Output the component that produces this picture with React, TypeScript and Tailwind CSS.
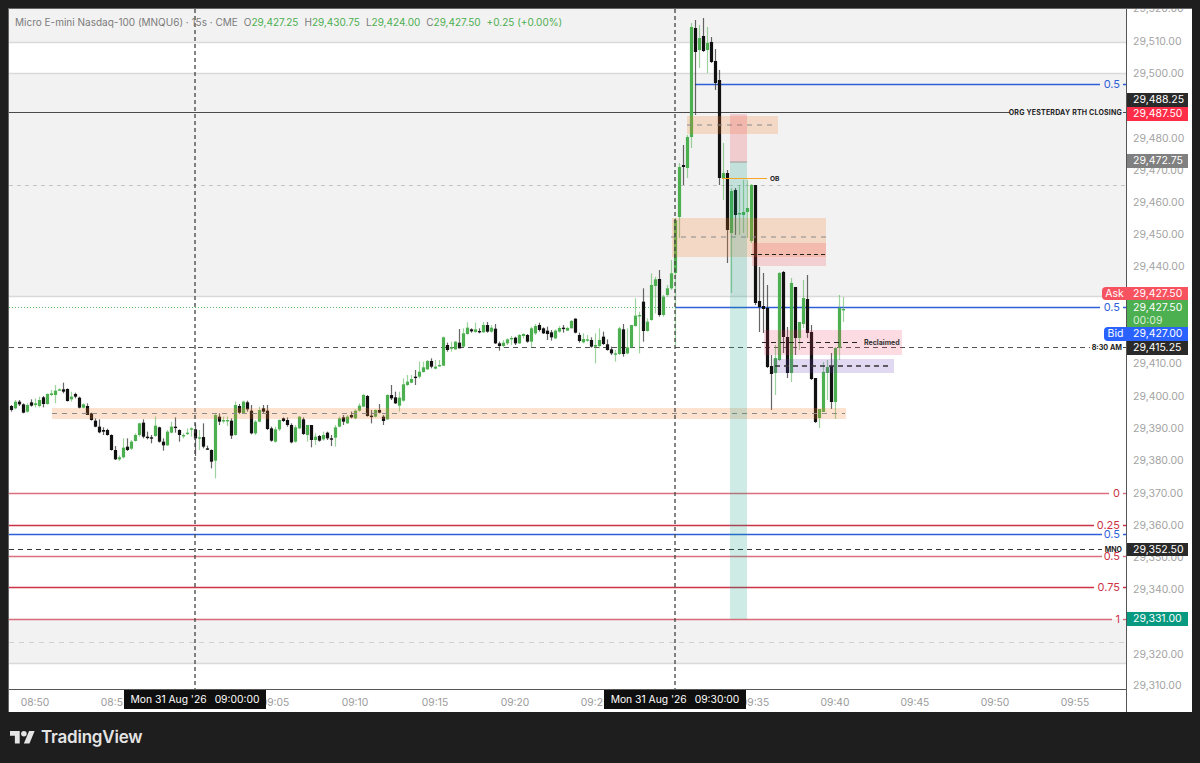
import React from "react";

// [isGreen, bodyTop, bodyBottom, high, low]
type C = [number, number, number, number, number];

// read off the chart at 3x, y is (value / 3 + offset)
const early: C[] = [
  [0,108,120,105,125],[1,95,115,90,118],[0,95,103,90,108],[0,103,128,100,130],[1,105,125,100,128],[0,97,107,88,110],[1,100,105,85,112],[1,90,108,80,112],[0,82,102,78,112],[1,72,102,70,104],
  [1,70,75,60,78],[1,62,75,45,100],[1,58,62,55,63],[0,58,65,38,70],[0,57,93,55,95],[1,80,88,65,95],[0,72,80,68,85],[0,83,113,80,115],[1,103,113,100,115],[0,108,135,100,135],
  [0,130,150,128,152],[0,152,170,145,172],[0,170,187,148,190],[0,180,185,172,195],[0,180,195,176,197],[0,195,240,193,242],[0,240,268,228,270],[1,262,268,256,273],[1,233,262,205,265],[0,230,240,205,243],
  [1,215,236,210,240],[1,195,213,190,215],[1,160,195,158,200],[0,158,200,148,205],[0,200,204,185,208],[0,202,203,195,220],[1,167,198,140,200],[0,172,215,170,218],[0,215,226,205,242],[1,185,226,180,228],
  [1,170,188,155,190],[0,170,173,142,188],[0,180,195,178,215],[1,195,198,190,205],[1,188,190,175,195],[1,175,178,172,200],[0,178,205,160,258],[1,202,205,180,240],[0,201,230,160,235],[0,235,237,227,240],
  [0,240,275,238,295],[1,135,272,130,325],[0,140,155,130,165],[1,150,152,140,160],[1,150,152,140,168],[0,152,197,145,207],[1,105,195,95,197],[0,108,128,102,132],[1,95,130,92,132],[0,97,118,92,125],
  [0,122,190,105,193],[1,155,190,150,195],[1,120,155,110,157],[0,115,125,105,130],[0,122,177,105,180],[0,175,212,170,215],[1,178,215,170,218],[1,150,178,148,183],[0,145,153,142,156],[0,150,165,142,170],
  [0,165,217,160,220],[1,172,215,165,218],[1,140,175,138,178],[0,148,192,142,195],[1,165,195,165,215],[0,165,210,165,232],[1,200,210,190,225],[0,198,212,195,215],[1,195,208,185,212],[0,188,205,185,210],
  [0,205,207,195,228],[1,172,203,165,230],[1,145,170,140,172],
];

const middle: C[] = [
  [0,472,485,465,495],[1,470,490,465,492],[0,465,472,455,475],[1,452,475,448,478],[1,437,452,430,455],[1,405,440,402,442],[0,408,468,405,470],[0,467,470,450,490],[1,450,470,448,472],[0,450,458,432,460],
  [0,470,483,465,495],[1,405,478,403,480],[0,405,415,375,420],[0,412,430,395,432],[1,413,437,395,455],[1,373,422,355,425],[1,365,375,345,378],[1,357,368,345,370],[0,350,352,330,375],[1,335,350,305,355],
  [1,322,336,305,338],[1,303,328,300,330],[0,303,320,295,325],[1,320,326,300,328],[1,315,318,300,320],[1,232,317,230,318],[0,255,270,248,275],[1,262,265,245,275],[1,245,268,243,270],[0,248,265,207,265],
  [1,220,260,205,262],[1,203,222,187,224],[0,208,214,205,218],[1,208,216,188,218],[0,213,217,205,220],[1,195,217,186,218],[0,195,215,186,218],[1,203,215,195,218],[0,206,250,192,252],[0,250,258,245,272],
  [1,248,258,240,262],[1,238,250,235,255],[1,234,238,228,255],[0,233,250,230,255],[1,225,250,222,252],[1,222,228,220,235],[0,225,245,222,248],[1,205,245,200,262],[1,198,220,192,225],[0,195,210,188,215],
  [0,205,220,202,222],[0,212,222,200,240],[0,217,232,210,242],[1,212,235,208,238],[1,204,215,198,218],[0,203,205,195,218],[1,204,212,200,212],[1,183,205,180,205],[0,176,218,175,220],[0,225,243,218,248],
  [1,237,247,220,250],[1,238,240,225,245],[0,240,260,232,263],[1,255,260,220,310],[1,240,258,205,265],[0,230,252,215,255],[0,253,270,238,272],[0,268,280,260,285],[1,280,283,270,305],[1,205,282,200,285],
  [0,208,282,192,290],[1,262,280,205,283],[1,195,262,195,265],[1,167,198,115,200],[1,165,168,155,280],[0,125,213,85,245],[1,185,213,175,215],[1,75,180,40,182],[1,58,78,50,160],[0,57,165,30,170],
  [1,110,165,105,170],[1,85,105,75,110],[1,40,85,0,90],
];

// already in page pixels, starts at the 09:30 candle
const late: C[] = [
  [1,220,273,218,345],[1,167,217,163,238],[0,165,167,145,185],[1,137,168,135,178],[1,27,137,23,148],[0,28,52,20,115],[1,38,50,25,68],[0,36,51,18,52],[1,43,50,27,73],[0,42,62,37,63],
  [0,61,83,49,90],[0,80,178,70,185],[1,173,178,143,200],[0,173,230,170,263],[1,191,233,188,293],[0,190,215,188,235],[1,213,214,185,235],[1,212,215,180,233],[1,208,212,180,238],[1,185,241,184,243],
  [0,185,303,185,305],[0,301,307,267,332],[0,306,309,273,333],[0,308,367,285,368],[0,366,374,355,410],[1,358,373,345,395],[1,273,360,272,361],[0,272,337,271,353],[0,337,373,327,378],[1,283,373,278,382],
  [0,287,338,287,355],[1,322,338,322,350],[1,298,324,280,328],[0,299,333,275,338],[0,332,379,325,380],[0,378,422,378,423],[1,409,418,410,428],[1,372,412,362,412],[1,367,373,360,400],[0,366,402,353,409],
  [1,348,402,347,419],[1,308,348,295,360],[1,309,310,297,322],
];

const toPage = (list: C[], startX: number, offsetY: number, scale: number) =>
  list.map((c, i) => ({
    x: startX + 4 * i,
    up: c[0] === 1,
    top: c[1] / scale + offsetY,
    bottom: c[2] / scale + offsetY,
    high: c[3] / scale + offsetY,
    low: c[4] / scale + offsetY,
  }));

const candles = [
  ...toPage(early, 11.5, 370, 3),
  ...toPage(middle, 343.5, 260, 3),
  ...toPage(late, 675.5, 0, 1),
];

const priceTicks = [
  ["29,520.00", 8], ["29,510.00", 41], ["29,500.00", 73], ["29,480.00", 138], ["29,470.00", 170], ["29,460.00", 202],
  ["29,450.00", 234], ["29,440.00", 266], ["29,410.00", 363], ["29,400.00", 396], ["29,390.00", 428], ["29,380.00", 460],
  ["29,370.00", 493], ["29,360.00", 525], ["29,350.00", 557], ["29,340.00", 589], ["29,320.00", 654], ["29,310.00", 685],
] as const;

const priceTags = [
  { text: "29,488.25", top: 93, height: 14, bg: "bg-[#2a2a2a]" },
  { text: "29,487.50", top: 107, height: 14, bg: "bg-[#ff2d48]" },
  { text: "29,472.75", top: 154, height: 14, bg: "bg-[#808080]" },
  { text: "29,427.50", top: 287, height: 13, bg: "bg-[#f7525f]" },
  { text: "29,427.00", top: 327, height: 14, bg: "bg-[#2962ff]" },
  { text: "29,415.25", top: 341, height: 14, bg: "bg-[#2a2a2a]" },
  { text: "29,352.50", top: 543, height: 13, bg: "bg-[#2a2a2a]" },
  { text: "29,331.00", top: 612, height: 14, bg: "bg-[#089981]" },
];

const timeTicks = [
  ["08:50", 35], ["08:55", 115], ["09:05", 275], ["09:10", 355], ["09:15", 435], ["09:20", 515],
  ["09:25", 595], ["09:35", 755], ["09:40", 835], ["09:45", 915], ["09:50", 995], ["09:55", 1075],
] as const;

const RED = "#cc3347";
const BLUE = "#2f5fd8";

const fibLines = [
  { y: 84, x1: 695, x2: 1100, label: "0.5", color: BLUE, width: 1.5, opacity: 1 },
  { y: 307, x1: 675, x2: 1100, label: "0.5", color: BLUE, width: 1.5, opacity: 1 },
  { y: 493, x1: 9, x2: 1109, label: "0", color: RED, width: 1.4, opacity: 0.7 },
  { y: 525, x1: 9, x2: 1094, label: "0.25", color: RED, width: 1.5, opacity: 1 },
  { y: 534, x1: 9, x2: 1102, label: "0.5", color: BLUE, width: 1.5, opacity: 1 },
  { y: 556, x1: 9, x2: 1102, label: "0.5", color: RED, width: 1.4, opacity: 0.7 },
  { y: 587, x1: 9, x2: 1094, label: "0.75", color: RED, width: 1.5, opacity: 1 },
  { y: 619, x1: 9, x2: 1112, label: "1", color: RED, width: 1.4, opacity: 0.7 },
];

function ChartDrawing() {
  return (
    <svg className="absolute inset-0" width={1117} height={680} viewBox="9 9 1117 680">
      {/* session bands */}
      <rect x={9} y={9} width={1117} height={34} fill="#f2f2f2" />
      <rect x={9} y={73} width={1117} height={224} fill="#f2f2f2" />
      <rect x={9} y={619} width={1117} height={45} fill="#f2f2f2" />
      {[42.5, 73.5, 296.5, 663.5].map((y) => (
        <line key={y} x1={9} x2={1126} y1={y} y2={y} stroke="#d9d9d9" strokeWidth={1.6} />
      ))}
      <line x1={9} x2={1126} y1={185.5} y2={185.5} stroke="#c4c4c4" strokeDasharray="4 4" />
      <line x1={9} x2={1126} y1={642.5} y2={642.5} stroke="#d0d0d0" strokeDasharray="5 5" />

      {/* levels under the candles */}
      <line x1={9} x2={1010} y1={112.5} y2={112.5} stroke="#4a4a4a" strokeWidth={1.1} />
      <line x1={1123} x2={1126} y1={112.5} y2={112.5} stroke="#4a4a4a" />
      <line x1={9} x2={675} y1={307.5} y2={307.5} stroke="#5fbb63" strokeWidth={1.2} strokeDasharray="1 2" />
      <line x1={9} x2={1090} y1={347.5} y2={347.5} stroke="#555" strokeWidth={1.2} strokeDasharray="5 4" />
      <line x1={1123} x2={1126} y1={347.5} y2={347.5} stroke="#444" />
      <line x1={9} x2={1102} y1={549.5} y2={549.5} stroke="#333" strokeDasharray="5 4" />
      {fibLines.map((l) => (
        <g key={l.y} opacity={l.opacity}>
          <line x1={l.x1} x2={l.x2} y1={l.y + 0.5} y2={l.y + 0.5} stroke={l.color} strokeWidth={l.width} />
          <line x1={1123} x2={1126} y1={l.y + 0.5} y2={l.y + 0.5} stroke={l.color} strokeWidth={l.width} />
        </g>
      ))}

      {/* candles */}
      {candles.map((c) => (
        <g key={c.x}>
          <line
            x1={c.x}
            x2={c.x}
            y1={c.high}
            y2={c.low}
            stroke={c.up ? "#4caf50" : "#333"}
            strokeWidth={1.2}
            strokeOpacity={c.up ? 0.55 : 0.75}
          />
          <rect
            x={c.x - 1.6}
            y={c.top}
            width={3.2}
            height={Math.max(c.bottom - c.top, 1.4)}
            fill={c.up ? "#4caf50" : "#111"}
          />
        </g>
      ))}

      {/* drawings on top */}
      <rect x={52} y={408} width={794} height={11} fill="#f57c2a" fillOpacity={0.22} />
      <line x1={52} x2={845} y1={413.5} y2={413.5} stroke="#8a8a8a" strokeDasharray="5 5" />
      <rect x={687} y={116} width={91} height={18} fill="#f57c2a" fillOpacity={0.22} />
      <line x1={687} x2={776} y1={125} y2={125} stroke="#8a8a8a" strokeDasharray="5 5" />
      <rect x={672} y={218} width={154} height={39} fill="#f57c2a" fillOpacity={0.22} />
      <line x1={671} x2={826} y1={237} y2={237} stroke="#8a8a8a" strokeDasharray="5 5" />
      <rect x={752} y={243} width={74} height={23} fill="#f23645" fillOpacity={0.18} />
      <line x1={751} x2={827} y1={254.5} y2={254.5} stroke="#222" strokeDasharray="4 3" />
      <rect x={764} y={330} width={138} height={25} fill="#f23660" fillOpacity={0.18} />
      <line x1={762} x2={860} y1={342.5} y2={342.5} stroke="#222" strokeDasharray="5 4" />
      <rect x={773} y={359} width={121} height={14} fill="#673ab7" fillOpacity={0.2} />
      <line x1={775} x2={892} y1={366} y2={366} stroke="#333" strokeWidth={1.3} strokeDasharray="5 4" />
      <rect x={730} y={114} width={17} height={48} fill="#f23645" fillOpacity={0.2} />
      <rect x={730} y={162} width={17} height={457} fill="#089981" fillOpacity={0.2} />
      <line x1={730} x2={747} y1={162} y2={162} stroke="#999" />
      <line x1={722} x2={767} y1={178.5} y2={178.5} stroke="#f5a623" strokeWidth={1.2} />

      {/* session opens */}
      <line x1={195} x2={195} y1={9} y2={689} stroke="#444" strokeWidth={1.3} strokeDasharray="4 3" />
      <line x1={675} x2={675} y1={9} y2={689} stroke="#444" strokeWidth={1.3} strokeDasharray="4 3" />

      {/* labels */}
      {fibLines.map((l) => (
        <text key={l.y} x={1120} y={l.y + 4} textAnchor="end" fontSize={11} fill={l.color}>
          {l.label}
        </text>
      ))}
      <text x={1122} y={115} textAnchor="end" fontSize={7} letterSpacing={0.2} fontWeight={700} fill="#222">
        ORG YESTERDAY RTH CLOSING
      </text>
      <text x={1122} y={350} textAnchor="end" fontSize={7.2} fontWeight={700} fill="#222">
        8:30 AM
      </text>
      <text x={1122} y={552} textAnchor="end" fontSize={7} fontWeight={700} fill="#222">
        MNO
      </text>
      <text x={770} y={181} fontSize={6.6} fontWeight={700} fill="#222">
        OB
      </text>
      <text x={864} y={345} fontSize={7} fontWeight={700} fill="#333">
        Reclaimed
      </text>
    </svg>
  );
}

export default function App() {
  return (
    <div className="h-[763px] w-[1200px] overflow-hidden bg-[#1e1e1e] pt-2 [font-family:Inter,sans-serif]">
      <div className="mx-2 flex h-[704px] w-[1184px] border-t border-l border-[#666]">
        <div className="flex w-[1117px] flex-col">
          <div className="relative h-[680px] overflow-hidden bg-white">
            <ChartDrawing />
            <div className="absolute top-[6px] left-[6px] flex gap-[6px] text-[10px] whitespace-nowrap text-[#7b7b7b]">
              <span>Micro E-mini Nasdaq-100 (MNQU6) · 15s · CME</span>
              <span>
                O<span className="text-[#4caf50]">29,427.25</span>
              </span>
              <span>
                H<span className="text-[#4caf50]">29,430.75</span>
              </span>
              <span>
                L<span className="text-[#4caf50]">29,424.00</span>
              </span>
              <span>
                C<span className="text-[#4caf50]">29,427.50</span>
              </span>
              <span className="text-[#4caf50]">+0.25 (+0.00%)</span>
            </div>
          </div>
          <div className="relative h-[23px] border-t border-[#555] bg-white text-[10.3px] text-[#9a9a9a]">
            {timeTicks.map(([t, x]) => (
              <span key={t} className="absolute top-[5px] -translate-x-1/2" style={{ left: x - 9 }}>
                {t}
              </span>
            ))}
            <span className="absolute top-0 left-[115px] flex h-[19px] w-[142px] items-center justify-center gap-[8px] bg-[#0f0f0f] text-white">
              <span>Mon 31 Aug '26</span>
              <span>09:00:00</span>
            </span>
            <span className="absolute top-0 left-[595px] flex h-[19px] w-[142px] items-center justify-center gap-[8px] bg-[#0f0f0f] text-white">
              <span>Mon 31 Aug '26</span>
              <span>09:30:00</span>
            </span>
          </div>
        </div>

        <div className="relative w-[66px] overflow-visible border-l border-[#555] bg-white text-[10.5px]">
          <div className="absolute inset-0 overflow-hidden">
            {priceTicks.map(([t, y]) => (
              <span
                key={t}
                className="absolute left-[6px] -translate-y-1/2 whitespace-nowrap text-[#a3a3a3]"
                style={{ top: y - 8 }}
              >
                {t}
              </span>
            ))}
          </div>
          {priceTags.map((tag) => (
            <span
              key={tag.top}
              className={`absolute left-0 flex w-[61px] items-center pl-[6px] whitespace-nowrap text-white ${tag.bg}`}
              style={{ top: tag.top - 9, height: tag.height }}
            >
              {tag.text}
            </span>
          ))}
          <div className="absolute top-[291px] left-0 flex h-[27px] w-[61px] flex-col justify-center bg-[#4caf50] pl-[6px] leading-[13px] text-white">
            <span>29,427.50</span>
            <span className="text-[#d8f0d9]">00:09</span>
          </div>
          <span className="absolute top-[278px] left-[-25px] flex h-[13px] w-[25px] items-center justify-center rounded-l-sm bg-[#f7525f] text-white">
            Ask
          </span>
          <span className="absolute top-[318px] left-[-23px] flex h-[14px] w-[23px] items-center justify-center rounded-l-sm bg-[#2962ff] text-white">
            Bid
          </span>
        </div>
      </div>

      <div className="flex h-[51px] items-center gap-[6px] pl-[10px] text-[#e4e4e4]">
        <svg width={25} height={12.5} viewBox="0 4 36 18" fill="currentColor">
          <path d="M14 22H7V11H0V4h14v18z" />
          <path d="M28 22h-8l7.5-18h8L28 22z" />
          <circle cx={20} cy={8} r={4} />
        </svg>
        <span className="text-[17px] font-semibold tracking-[-0.2px]">TradingView</span>
      </div>
    </div>
  );
}
